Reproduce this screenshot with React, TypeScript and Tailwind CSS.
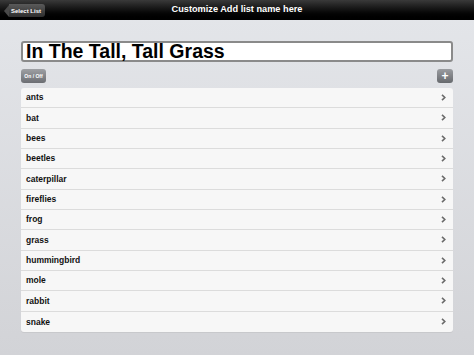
import React from "react";

const items = [
  "ants",
  "bat",
  "bees",
  "beetles",
  "caterpillar",
  "fireflies",
  "frog",
  "grass",
  "hummingbird",
  "mole",
  "rabbit",
  "snake",
];

function Chevron() {
  return (
    <svg width="5" height="7" viewBox="0 0 5 7" className="shrink-0">
      <path d="M1 0.8 L3.8 3.5 L1 6.2" fill="none" stroke="#6b6b6b" strokeWidth="1.6" />
    </svg>
  );
}

export default function App() {
  return (
    <div
      className="w-[474px] h-[355px] overflow-hidden flex flex-col bg-gradient-to-b from-[#e4e6ea] to-[#d2d3d7]"
      style={{ fontFamily: '"Liberation Sans", Arial, sans-serif' }}
    >
      {/* Top bar */}
      <div className="h-[20px] shrink-0 relative flex items-center justify-center bg-gradient-to-b from-[#3a3a3a] via-[#111] to-[#000]">
        <div className="absolute left-[4px] top-[4px] h-[13px] flex items-center">
          <div className="w-0 h-0 border-y-[6.5px] border-y-transparent border-r-[5px] border-r-[#4a4a4a]" />
          <div className="h-[13px] pl-[2px] pr-[4px] flex items-center rounded-r-[3px] bg-gradient-to-b from-[#5a5a5a] to-[#2e2e2e] text-[6px] font-bold text-white leading-none">
            Select List
          </div>
        </div>
        <span className="text-[9.2px] font-bold text-white leading-none">Customize Add list name here</span>
      </div>

      <div className="flex flex-col px-[21px] pt-[21px]">
        {/* Name input */}
        <div className="h-[21px] rounded-[3px] border-2 border-[#8a8a8a] bg-white flex items-center pl-[3px]">
          <span className="text-[19.5px] font-bold text-black leading-none">In The Tall, Tall Grass</span>
        </div>

        {/* Buttons row */}
        <div className="mt-[7px] flex items-center justify-between">
          <div className="h-[14px] w-[25px] rounded-[3px] bg-gradient-to-b from-[#9ea0a4] to-[#6c6e73] flex items-center justify-center text-[5px] font-bold text-white leading-none">
            On / Off
          </div>
          <div className="h-[14px] w-[16px] rounded-[3px] bg-gradient-to-b from-[#9a9ca0] to-[#676a6e] flex items-center justify-center text-[12px] font-bold text-white leading-none">
            +
          </div>
        </div>

        {/* List */}
        <div className="mt-[5px] rounded-[3px] bg-[#f7f7f7] flex flex-col shadow-[0_1px_0_#c8c9cc]">
          {items.map((item, i) => (
            <div
              key={item}
              className={`h-[20.33px] flex items-center justify-between pl-[5px] pr-[7px] ${
                i < items.length - 1 ? "border-b border-[#dcdcdc]" : ""
              }`}
            >
              <span className="text-[8.5px] font-bold text-[#111] leading-none">{item}</span>
              <Chevron />
            </div>
          ))}
        </div>
      </div>
    </div>
  );
}
